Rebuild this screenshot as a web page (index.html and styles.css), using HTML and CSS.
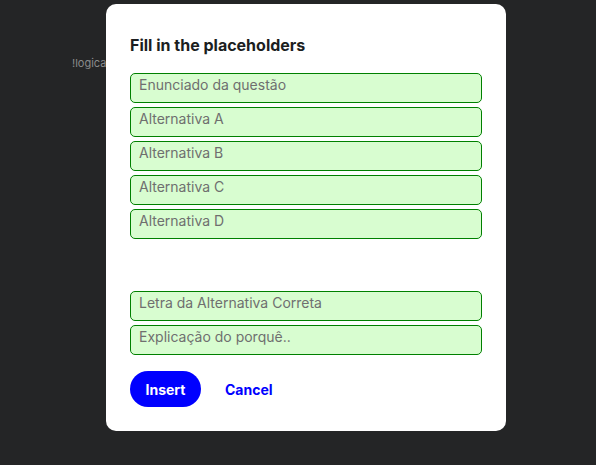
FILE: index.html
```html
<!DOCTYPE html>
<html lang="en">
<head>
    <meta charset="UTF-8">
    <meta name="viewport" content="width=device-width, initial-scale=1.0">
    <title>Fill in the placeholders</title>
    <link rel="stylesheet" href="styles.css">
</head>
<body>
    <div class="backdrop">
        <span class="behind">!logica</span>
    </div>

    <div class="modal">
        <h1>Fill in the placeholders</h1>
        <form class="fields">
            <textarea placeholder="Enunciado da questão"></textarea>
            <textarea placeholder="Alternativa A"></textarea>
            <textarea placeholder="Alternativa B"></textarea>
            <textarea placeholder="Alternativa C"></textarea>
            <textarea placeholder="Alternativa D"></textarea>
            <div class="spacer"></div>
            <textarea placeholder="Letra da Alternativa Correta"></textarea>
            <textarea placeholder="Explicação do porquê.."></textarea>
        </form>
        <div class="actions">
            <button class="insert">Insert</button>
            <button class="cancel">Cancel</button>
        </div>
    </div>
</body>
</html>
```

FILE: styles.css
```css
body {
    margin: 0;
    padding: 4px 0 0 16px;
    height: 461px;
    background: #242526;
    font-family: "Inter", "Noto Sans", sans-serif;
    display: flex;
    justify-content: center;
    align-items: flex-start;
}
.backdrop {
    position: absolute;
    left: 0;
    top: 0;
}
.behind {
    position: absolute;
    left: 72px;
    top: 56px;
    font-size: 11px;
    color: #8a8b8c;
}
.modal {
    position: relative;
    background: #fff;
    width: 400px;
    height: 427px;
    box-sizing: border-box;
    padding: 31px 24px 0 24px;
    border-radius: 10px;
}
h1 {
    margin: 0 0 18px 0;
    font-size: 16px;
    font-weight: 700;
    color: #1c1e21;
}
.fields {
    display: flex;
    flex-direction: column;
    gap: 4px;
}
textarea {
    display: block;
    box-sizing: border-box;
    width: 352px;
    height: 30px;
    margin: 0;
    padding: 2px 8px;
    border: 1px solid #008000;
    border-radius: 5px;
    background: #d8fdd0;
    resize: none;
    overflow: hidden;
    font-family: "Inter", "Noto Sans", sans-serif;
    font-size: 14px;
    line-height: 18px;
    color: #333;
}
textarea::placeholder {
    color: #6f6f6f;
}
.spacer {
    height: 44px;
}
.actions {
    display: flex;
    align-items: center;
    gap: 12px;
    margin-top: 16px;
}
button {
    border: none;
    font-family: "Inter", "Noto Sans", sans-serif;
    font-size: 14px;
    font-weight: 700;
    cursor: pointer;
}
.insert {
    width: 71px;
    height: 36px;
    border-radius: 18px;
    background: #0000ff;
    color: #fff;
}
.cancel {
    background: none;
    color: #0000ff;
    padding: 0 12px;
}
```
